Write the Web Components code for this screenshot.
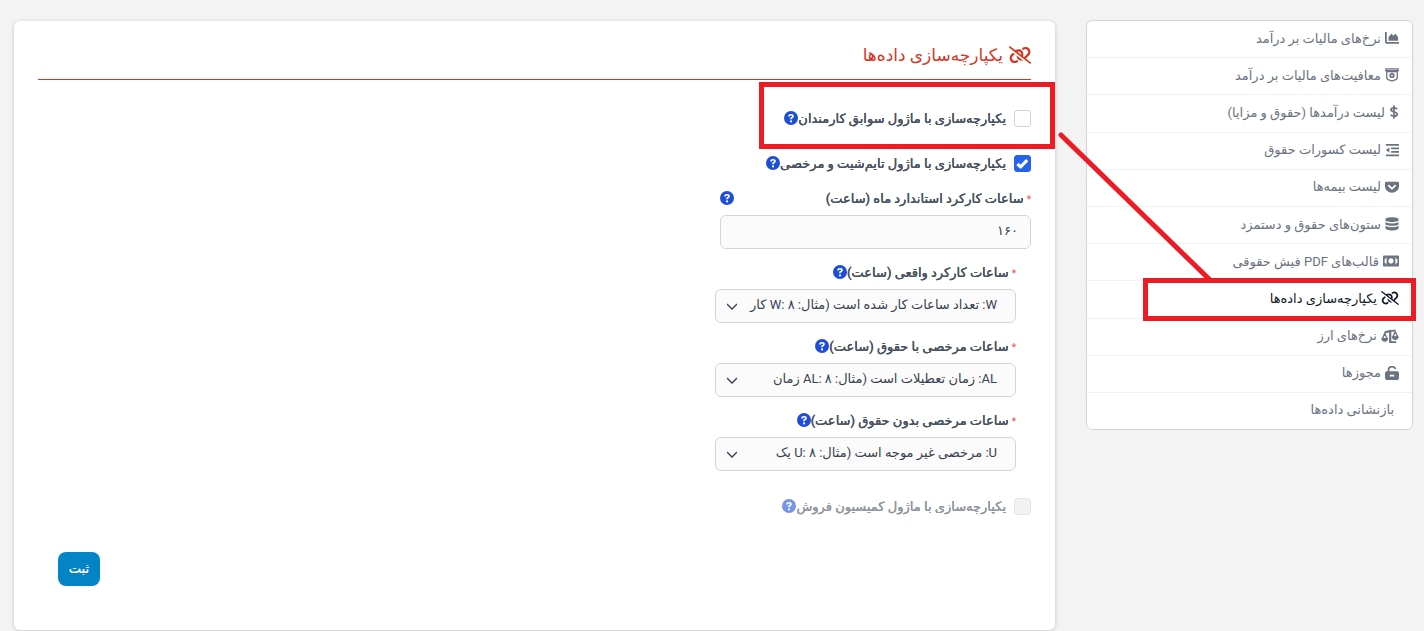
<!DOCTYPE html>
<html lang="fa" dir="rtl">
<head>
<meta charset="utf-8">
<meta name="viewport" content="width=device-width, initial-scale=1">
<title>یکپارچه‌سازی داده‌ها</title>
<style>
body{margin:0;background:#f3f3f3;font-family:Roboto,"DejaVu Sans",sans-serif;font-size:14px;color:#374151}
</style>
</head>
<body>
<payroll-settings></payroll-settings>
<script>
const ICONS = {
  chart: ['0 0 16 14', '<path d="M1 0v11.500q0 1 1 1H16" fill="none" stroke="currentColor" stroke-width="2"/><path d="M4 10V6l3-4 2.500 2L12 2l3 4v4z"/>'],
  badge: ['0 0 16 16', '<path d="M1 1h14v2H1zM2 4h12v7.500q0 1-1 1.400L8 15l-5-2.100q-1-.4-1-1.400z" fill="none" stroke="currentColor" stroke-width="1.500"/><circle cx="8" cy="8.500" r="2" fill="none" stroke="currentColor" stroke-width="2"/>'],
  dollar: ['0 0 10 16', '<path d="M8.600 4.800Q7.500 3.300 5 3.300c-2 0-3.400.7-3.400 2.200C1.600 9 8.700 7 8.700 10.600c0 1.500-1.700 2.200-3.700 2.200q-2.600 0-3.900-1.700M5 .5v15" fill="none" stroke="currentColor" stroke-width="2"/>'],
  outdent: ['0 0 16 16', '<path d="M1 2h15M7 6h9M7 10h9M1 14h15" stroke="currentColor" stroke-width="2"/><path d="M1 8l4-3v6z"/>'],
  pocket: ['0 0 16 14', '<path fill-rule="evenodd" d="M1.500 1h13Q16 1 16 2.500V6a8 7.500 0 0 1-16 0V2.500Q0 1 1.500 1zM4.500 4 3 5.500 8 10.300 13 5.500 11.500 4 8 7.500z"/>'],
  database: ['0 0 16 17', '<path d="M0 2.800C0-.7 16-.7 16 2.800v1.200C16 6.800 0 6.800 0 4zM0 6.300q8 3 16 0v2.200c0 3-16 3-16 0zM0 10.800q8 3 16 0v2.700c0 4-16 4-16 0z"/>'],
  money: ['0 0 20 14', '<path fill-rule="evenodd" d="M1.500 0h17Q20 0 20 1.500v11q0 1.500-1.500 1.500h-17Q0 14 0 12.500v-11Q0 0 1.500 0zM2 4.500v5Q4.500 9.500 4.500 12h11q0-2.500 2.500-2.500v-5q-2.500 0-2.500-2.500h-11q0 2.500-2.500 2.500z"/><path fill-rule="evenodd" d="M4.500 2h11v10h-11zM10 3.700a3.300 3.300 0 1 0 .01 0z"/>'],
  unlink: ['0 0 640 512', '<path d="M38.800 5.100C28.400-3.100 13.300-1.200 5.100 9.200s-6.300 25.500 4.100 33.700l592 464c10.400 8.200 25.500 6.300 33.700-4.100s6.300-25.500-4.100-33.700L489.300 358.200l90.500-90.500c56.500-56.500 56.500-148 0-204.500c-50-50-128.800-56.500-186.300-15.400l-1.600 1.100c-14.400 10.300-17.700 30.300-7.400 44.600s30.300 17.700 44.600 7.400l1.600-1.100c32.100-22.900 76-19.300 103.800 8.600c31.500 31.500 31.500 82.500 0 114l-96 96-31.900-25C430.900 239.600 420.100 175.100 377 132c-52.200-52.300-134.500-56.200-191.300-11.700zM239 162c30.100-14.900 67.700-9.900 92.800 15.300c20 20 27.500 48.300 21.700 74.500zM406.600 416.400L220.900 270c-2.100 39.800 12.200 80.100 42.200 110c38.900 38.900 94.400 51 143.500 36.300zM117 187.500l-56.800 56.800c-56.500 56.500-56.500 148 0 204.500c50 50 128.800 56.500 186.300 15.400l1.600-1.100c14.400-10.300 17.700-30.300 7.400-44.600s-30.300-17.700-44.600-7.400l-1.600 1.100c-32.100 22.900-76 19.300-103.800-8.600C74 372 74 321 105.500 289.500l61.800-61.800z"/>'],
  scales: ['0 0 20 16', '<path d="M4 2.500l5-1q1-1.800 2 0l5-1v2l-4.500 1V14H17v2H9V4L4 5z"/><path d="M4 5 1.300 11h5.400zM16 3l-2.700 6h5.400z" fill="none" stroke="currentColor" stroke-width="1.500"/><path d="M0 10.500h8q-.8 4-4 4t-4-4zM12 8.500h8q-.8 4-4 4t-4-4z"/>'],
  unlock: ['0 0 16 16', '<path d="M4 7V4.500C4-.2 11-.2 12 3.500" fill="none" stroke="currentColor" stroke-width="2"/><path fill-rule="evenodd" d="M2 6h12Q16 6 16 8v6q0 2-2 2H2q-2 0-2-2V8q0-2 2-2zM5.500 10v2h5v-2z"/>'],
  help: ['0 0 16 16', '<circle cx="8" cy="8" r="8"/><path d="M5.700 6.200Q5.700 4.300 8 4.300t2.300 1.800Q10.300 7.300 8 8.400V9.500" fill="none" stroke="#fff" stroke-width="1.900"/><circle cx="8" cy="11.900" r="1.200" fill="#fff"/>']
};
const mount = (el, html) => { el.attachShadow({mode: 'open'}).innerHTML = html; };

customElements.define('ui-icon', class extends HTMLElement {
  connectedCallback() {
    const [box, art] = ICONS[this.getAttribute('name')];
    mount(this, `<style>:host{display:inline-block;flex:none;width:14px;height:14px}svg{display:block;width:100%;height:100%;fill:currentColor}</style>
    <svg viewBox="${box}" aria-hidden="true">${art}</svg>`);
  }
});

customElements.define('help-tip', class extends HTMLElement {
  connectedCallback() {
    mount(this, `<style>:host{display:block;flex:none}button{display:block;border:0;padding:0;background:none;color:#1d4ed8}ui-icon{display:block}</style>
    <button type="button" aria-label="راهنما"><ui-icon name="help"></ui-icon></button>`);
  }
});

customElements.define('side-link', class extends HTMLElement {
  connectedCallback() {
    const icon = this.getAttribute('icon');
    mount(this, `<style>
    :host{display:flex;flex:1;border-bottom:1px solid #f0f1f3;color:#6b7280}
    :host(:last-of-type){border-bottom:0}
    :host([active]){color:#111827}
    a{display:flex;flex:1;align-items:center;gap:4px;padding:0 13px 2px;color:inherit;text-decoration:none;font-size:13px;white-space:nowrap}
    a.plain{padding-right:18px}
    ui-icon[name=dollar]{width:10px}
    ui-icon[name=unlink],ui-icon[name=scales]{width:18px}
    ui-icon[name=money]{width:16px}
    </style><a href="#" class="${icon ? '' : 'plain'}">${icon ? `<ui-icon name="${icon}"></ui-icon>` : ''}<slot></slot></a>`);
  }
});

customElements.define('side-menu', class extends HTMLElement {
  connectedCallback() {
    mount(this, `<style>:host{display:block}nav{display:flex;flex-direction:column;min-height:408px;background:#fff;border:1px solid #d1d5db;border-radius:6px}</style><nav><slot></slot></nav>`);
  }
});

const LABEL = 'label{font-size:13px;color:#4b5563;text-shadow:0 0 0 currentColor,0 0 0 currentColor;white-space:nowrap}';

customElements.define('check-row', class extends HTMLElement {
  connectedCallback() {
    const on = this.hasAttribute('checked') ? 'checked' : '', off = this.hasAttribute('disabled') ? 'disabled' : '';
    mount(this, `<style>
    :host{display:flex;align-items:center;height:20px}
    :host([disabled]){opacity:.6}
    input{appearance:none;box-sizing:border-box;width:17px;height:17px;margin:0;margin-left:8px;border:1px solid #d1d5db;border-radius:3px;background:#fff;flex:none}
    input:disabled{background:#e9eaec}
    input:checked{border-color:#2563eb;background:#2563eb url("data:image/svg+xml,%3Csvg xmlns='http://www.w3.org/2000/svg' viewBox='0 0 16 16'%3E%3Cpath d='M2.500 8.500l3.500 3 7-7' fill='none' stroke='white' stroke-width='3.300'/%3E%3C/svg%3E") center/100%}
    ${LABEL}
    </style><input type="checkbox" id="c" ${on} ${off}><label for="c"><slot></slot></label><help-tip></help-tip>`);
  }
});

customElements.define('form-field', class extends HTMLElement {
  connectedCallback() {
    const value = this.getAttribute('value'), select = this.hasAttribute('select');
    mount(this, `<style>
    :host{display:block;box-sizing:border-box;width:311px;max-width:100%}
    :host([select]){width:301px;margin-right:15px}
    .head{display:flex;align-items:center;height:20px;margin-bottom:7px}
    :host(:not([select])) .head{justify-content:space-between}
    ${LABEL}
    .req{color:#ef4444;font-size:10px;text-shadow:none;margin-left:3px}
    input,select{display:block;box-sizing:border-box;width:100%;height:34px;margin:0;border:1px solid #d1d5db;border-radius:6px;background-color:#fbfbfb;color:#374151;font:13px Roboto,"DejaVu Sans",sans-serif;padding:0 12px 3px}
    select{appearance:none;padding:0 18px 3px 30px;background-image:url("data:image/svg+xml,%3Csvg xmlns='http://www.w3.org/2000/svg' viewBox='0 0 10 10'%3E%3Cpath d='M0 3l5 5 5-5' fill='none' stroke='%23374151' stroke-width='1.300'/%3E%3C/svg%3E");background-repeat:no-repeat;background-position:left 11px center;background-size:10px}
    </style><div class="head"><label for="f"><span class="req">*</span><slot></slot></label><help-tip></help-tip></div>
    ${select ? `<select id="f"><option>${value}</option></select>` : `<input id="f" type="text" value="${value}">`}`);
  }
});

customElements.define('settings-panel', class extends HTMLElement {
  connectedCallback() {
    mount(this, `<style>
    :host{display:block}
    section{box-sizing:border-box;background:#fff;border-radius:6px;box-shadow:0 1px 4px rgba(0,0,0,.2);padding:20px 24px 44px;height:100%}
    h1{display:flex;align-items:center;gap:6px;margin:0 0 28px;height:28px;padding-bottom:10px;border-bottom:1px solid #d9351e;color:#d9351e;font-size:17px;font-weight:400}
    h1 ui-icon{width:22px;height:18px}
    form{display:flex;flex-direction:column;align-items:flex-start}
    check-row + check-row{margin-top:25px}
    check-row + form-field{margin-top:15px}
    form-field + form-field{margin-top:13px}
    form-field + check-row{margin-top:25px}
    button{align-self:flex-end;margin:36px 0 0 20px;width:42px;height:34px;border:0;border-radius:8px;background:#0284c7;color:#fff;font:13px Roboto,"DejaVu Sans",sans-serif;text-shadow:0 0 0 currentColor;padding:0 0 2px}
    </style><section><h1><ui-icon name="unlink"></ui-icon>یکپارچه‌سازی داده‌ها</h1>
    <form>
      <check-row>یکپارچه‌سازی با ماژول سوابق کارمندان</check-row>
      <check-row checked>یکپارچه‌سازی با ماژول تایم‌شیت و مرخصی</check-row>
      <form-field value="۱۶۰">ساعات کارکرد استاندارد ماه (ساعت)</form-field>
      <form-field select value="W: تعداد ساعات کار شده است (مثال: ۸ :W کار">ساعات کارکرد واقعی (ساعت)</form-field>
      <form-field select value="AL: زمان تعطیلات است (مثال: ۸ :AL زمان">ساعات مرخصی با حقوق (ساعت)</form-field>
      <form-field select value="U: مرخصی غیر موجه است (مثال: ۸ :U یک">ساعات مرخصی بدون حقوق (ساعت)</form-field>
      <check-row disabled>یکپارچه‌سازی با ماژول کمیسیون فروش</check-row>
      <button type="button">ثبت</button>
    </form></section>`);
  }
});

customElements.define('callout-marks', class extends HTMLElement {
  connectedCallback() {
    mount(this, `<style>:host{position:absolute;top:0;right:0;width:680px;height:340px;pointer-events:none}svg{display:block}</style>
    <svg width="680" height="340" viewBox="744 0 680 340" fill="none" stroke="#ed1c24" stroke-width="5" aria-hidden="true">
    <path d="M761.500 84.500h291v62h-291zM1145.500 280.500h268v38h-268z"/><path d="M1061 135l149 145" stroke-linecap="round"/></svg>`);
  }
});

customElements.define('payroll-settings', class extends HTMLElement {
  connectedCallback() {
    mount(this, `<style>
    :host{display:grid;grid-template-columns:327px minmax(0,1fr);gap:31px;position:relative;box-sizing:border-box;min-height:100vh;padding:20px 11px 1px 14px}
    side-menu{align-self:start}
    settings-panel{margin-top:1px}
    </style>
    <side-menu>
      <side-link icon="chart">نرخ‌های مالیات بر درآمد</side-link>
      <side-link icon="badge">معافیت‌های مالیات بر درآمد</side-link>
      <side-link icon="dollar">لیست درآمدها (حقوق و مزایا)</side-link>
      <side-link icon="outdent">لیست کسورات حقوق</side-link>
      <side-link icon="pocket">لیست بیمه‌ها</side-link>
      <side-link icon="database">ستون‌های حقوق و دستمزد</side-link>
      <side-link icon="money">قالب‌های PDF فیش حقوقی</side-link>
      <side-link icon="unlink" active>یکپارچه‌سازی داده‌ها</side-link>
      <side-link icon="scales">نرخ‌های ارز</side-link>
      <side-link icon="unlock">مجوزها</side-link>
      <side-link>بازنشانی داده‌ها</side-link>
    </side-menu>
    <settings-panel></settings-panel>
    <callout-marks></callout-marks>`);
  }
});
</script>
</body>
</html>
